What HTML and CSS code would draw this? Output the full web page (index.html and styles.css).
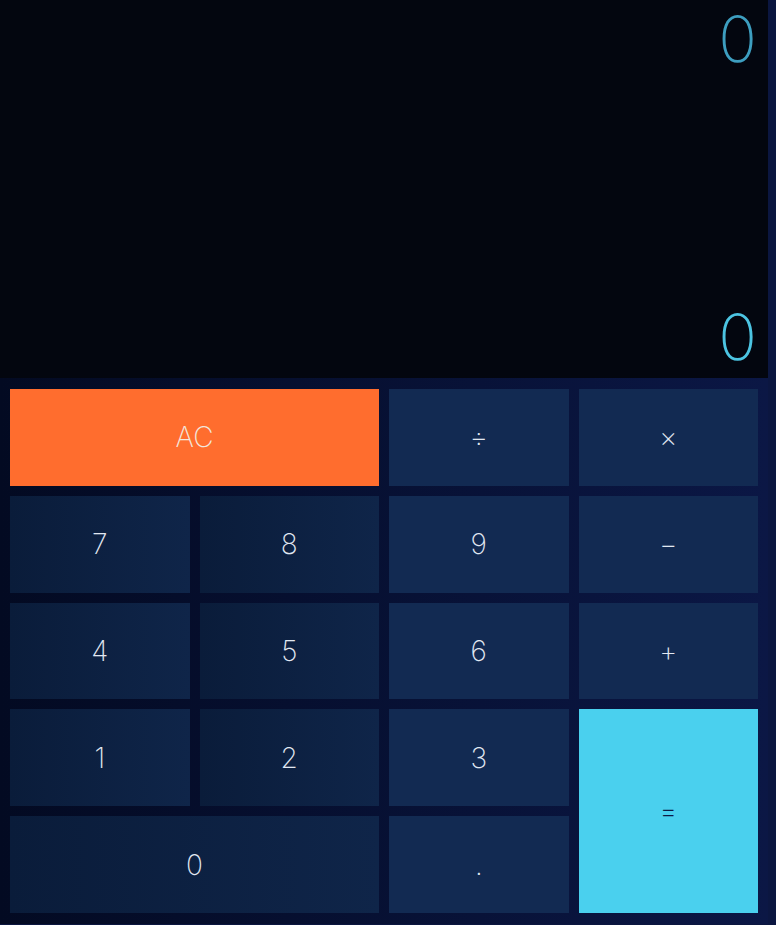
FILE: index.html
```html
<!DOCTYPE html>
<html lang="en">
<head>
<meta charset="utf-8">
<title>Calculator</title>
<link rel="stylesheet" href="styles.css">
</head>
<body>
<div class="calc">
  <div class="display">
    <div class="prev">0</div>
    <div class="curr">0</div>
  </div>
  <div class="keys">
    <button class="key ac span2">AC</button>
    <button class="key op">÷</button>
    <button class="key op">×</button>
    <button class="key num">7</button>
    <button class="key num">8</button>
    <button class="key op">9</button>
    <button class="key op">−</button>
    <button class="key num">4</button>
    <button class="key num">5</button>
    <button class="key op">6</button>
    <button class="key op">+</button>
    <button class="key num">1</button>
    <button class="key num">2</button>
    <button class="key op">3</button>
    <button class="key eq">=</button>
    <button class="key num span2">0</button>
    <button class="key op">.</button>
  </div>
</div>
</body>
</html>
```
FILE: styles.css
```css
html, body {
  margin: 0;
  padding: 0;
}
body {
  background: #0b1640;
  font-family: Inter, Lato, "Noto Sans", sans-serif;
  height: 925px;
  overflow: hidden;
}
.calc {
  width: 768px;
  height: 924px;
  display: flex;
  flex-direction: column;
}
.display {
  height: 378px;
  box-sizing: border-box;
  background: #03060f;
  display: flex;
  flex-direction: column;
  justify-content: space-between;
  align-items: flex-end;
  padding: 4px 11px 6px 0;
}
.prev, .curr {
  font-size: 64px;
  font-weight: 200;
  line-height: 1.1;
}
.prev { color: #3d9ec0; }
.curr { color: #4cc4e2; }
.keys {
  flex: 1;
  display: grid;
  grid-template-columns: repeat(4, 1fr);
  grid-template-rows: repeat(5, 1fr);
  gap: 10px;
  padding: 11px 10px 11px;
  background: linear-gradient(to right, #030a22, #0b1745);
}
.key {
  border: none;
  margin: 0;
  padding: 0;
  font-family: Inter, Lato, "Noto Sans", sans-serif;
  font-weight: 200;
  font-size: 28px;
  color: #e1e8f2;
  cursor: pointer;
}
.span2 { grid-column: span 2; }
.num { background: linear-gradient(to right, #0a1c3a, #0f2549); }
.op { background: #122a52; }
.ac { background: #ff6d2e; color: #f3e6dc; }
.eq { background: #4ad0ee; color: #0b1a45; grid-row: span 2; }
```
